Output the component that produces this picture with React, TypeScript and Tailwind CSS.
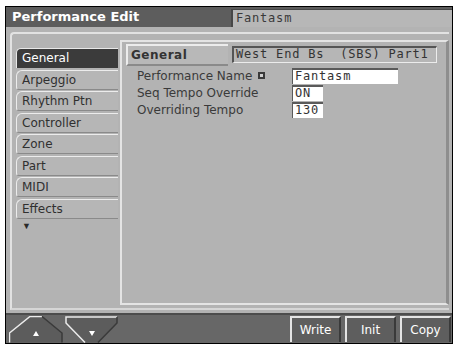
import React from "react";

const sans = "font-['DejaVu_Sans',sans-serif]";
const mono = "font-['DejaVu_Sans_Mono',monospace]";

const tabs = [
  "General",
  "Arpeggio",
  "Rhythm Ptn",
  "Controller",
  "Zone",
  "Part",
  "MIDI",
  "Effects",
];

interface ParamRow {
  label: string;
  value: string;
  wide?: boolean;
  icon?: boolean;
}

const params: ParamRow[] = [
  { label: "Performance Name", value: "Fantasm", wide: true, icon: true },
  { label: "Seq Tempo Override", value: "ON" },
  { label: "Overriding Tempo", value: "130" },
];

function Tab({ name, active }: { name: string; active: boolean }) {
  return (
    <div
      className={
        active
          ? "h-[20px] w-[102px] mb-[1.5px] rounded-tl-[5px] border-t border-l border-[#e8e8e8] bg-[#3b3b3b] text-white pl-[5px] text-[12px] leading-[19px] " +
            sans
          : "h-[20px] w-[102px] mb-[1.5px] rounded-tl-[6px] rounded-bl-[3px] border-t border-l border-[#ececec] border-b border-b-[#8a8a8a] bg-[#b6b6b6] text-[#303030] pl-[5px] text-[12px] leading-[18px] " +
            sans
      }
    >
      {name}
    </div>
  );
}

function BottomButton({ label }: { label: string }) {
  return (
    <div
      className={
        "w-[51px] h-[26px] bg-[#5e5e5e] border-t-2 border-l-2 border-[#e4e4e4] border-r-2 border-r-[#3a3a3a] border-b-0 text-white text-[12px] flex items-center justify-center " +
        sans
      }
    >
      {label}
    </div>
  );
}

export default function App() {
  return (
    <div className="w-[457px] h-[348px] bg-white pt-[6px] pl-[5px]">
      <div className="w-[448px] h-[338px] border border-black flex flex-col">
        {/* title bar */}
        <div className="h-[20px] shrink-0 flex bg-[#5d5d5d]">
          <div
            className={
              "w-[225px] text-white font-bold text-[13px] leading-[19px] pl-[6px] " +
              sans
            }
          >
            Performance Edit
          </div>
          <div
            className={
              "flex-1 mt-[2px] bg-[#b7b7b7] border-l-2 border-t border-[#474747] pl-[3px] text-[12px] tracking-[0.8px] leading-[17px] text-[#3a3a3a] " +
              mono
            }
          >
            Fantasm
          </div>
        </div>

        {/* body */}
        <div className="h-[286px] shrink-0 bg-[#b3b3b3] pt-[5px] pl-[4px] pr-[3px] pb-[3px]">
          <div className="h-full rounded-tl-[4px] border-t-2 border-l-2 border-[#e2e2e2] border-b-2 border-b-[#d6d6d6] flex">
            {/* tabs */}
            <div className="w-[108px] shrink-0 pl-[4px] pt-[14px]">
              {tabs.map((t, i) => (
                <Tab key={t} name={t} active={i === 0} />
              ))}
              <div className="pl-[6px] pt-[1px] text-[9px] leading-[10px] text-[#2a2a2a]">
                ▼
              </div>
            </div>

            {/* main panel */}
            <div className="flex-1 mt-[6px] mb-[3px] border-t-2 border-l-2 border-[#e4e4e4] border-r-[3px] border-r-[#8e8e8e] border-b-2 border-b-[#e4e4e4] pl-[4px] pt-[2px] pr-[3px]">
              <div className="flex">
                <div
                  className={
                    "w-[102px] h-[22px] border-t-2 border-l-2 border-[#ececec] border-b-2 border-b-[#8a8a8a] bg-[#b8b8b8] pl-[3px] text-[12px] font-bold tracking-[0.5px] leading-[18px] text-[#333] " +
                    sans
                  }
                >
                  General
                </div>
                <div
                  className={
                    "ml-[4px] mt-[2px] w-[205px] h-[17px] border-t-2 border-l-2 border-[#555] border-b border-r border-b-[#ececec] border-r-[#ececec] bg-[#b6b6b6] pl-[2px] text-[12px] tracking-[0.8px] leading-[13px] text-[#333] whitespace-pre " +
                    mono
                  }
                >
                  {"West End Bs  (SBS) Part1"}
                </div>
              </div>

              <div className="pl-[11px] pt-[1px]">
                {params.map((p) => (
                  <div key={p.label} className="h-[17px] flex items-center">
                    <div
                      className={
                        "w-[155px] flex items-center text-[12px] text-[#3a3a3a] " +
                        sans
                      }
                    >
                      {p.label}
                      {p.icon && (
                        <span className="ml-[6px] w-[7px] h-[7px] bg-[#3a3a3a] border border-[#3a3a3a] flex items-end justify-center">
                          <span className="w-[3px] h-[3px] bg-[#cfcfcf] mb-[1px]" />
                        </span>
                      )}
                    </div>
                    <div
                      className={
                        (p.wide ? "w-[106px]" : "w-[31px]") +
                        " h-[16px] bg-white border-t-2 border-l border-[#5a5a5a] pl-[2px] text-[12px] tracking-[0.8px] leading-[13px] text-[#333] " +
                        mono
                      }
                    >
                      {p.value}
                    </div>
                  </div>
                ))}
              </div>
            </div>
          </div>
        </div>

        {/* bottom bar */}
        <div className="flex-1 bg-[#676767] border-t-2 border-[#4c4c4c] flex">
          <svg width="112" height="27" className="ml-[3px] mt-[1px]">
            <polygon
              points="0.5,26.5 0.5,17 21,0.5 33,0.5 53,17 53,26.5"
              fill="#5c5c5c"
            />
            <polyline
              points="0.5,26.5 0.5,17 21,0.5 33,0.5"
              fill="none"
              stroke="#ececec"
              strokeWidth="1.5"
            />
            <polyline
              points="33,0.5 53,17 53,26.5"
              fill="none"
              stroke="#3a3a3a"
              strokeWidth="1.5"
            />
            <polygon points="24,20 30,20 27,15" fill="#ffffff" />

            <polygon
              points="57,1 108,1 108,7 89,26.5 76,26.5 57,7"
              fill="#5c5c5c"
            />
            <polyline
              points="57,26 57,7 57,1 108,1"
              fill="none"
              stroke="none"
            />
            <polyline
              points="76,26.5 57,7 57,1 108,1"
              fill="none"
              stroke="#ececec"
              strokeWidth="1.5"
            />
            <polyline
              points="108,1 108,7 89,26.5"
              fill="none"
              stroke="#3a3a3a"
              strokeWidth="1.5"
            />
            <polygon points="80,15 86,15 83,20" fill="#ffffff" />
          </svg>
          <div className="flex-1" />
          <div className="flex gap-[4px] mt-[1px] mr-[1px]">
            <BottomButton label="Write" />
            <BottomButton label="Init" />
            <BottomButton label="Copy" />
          </div>
        </div>
      </div>
    </div>
  );
}
